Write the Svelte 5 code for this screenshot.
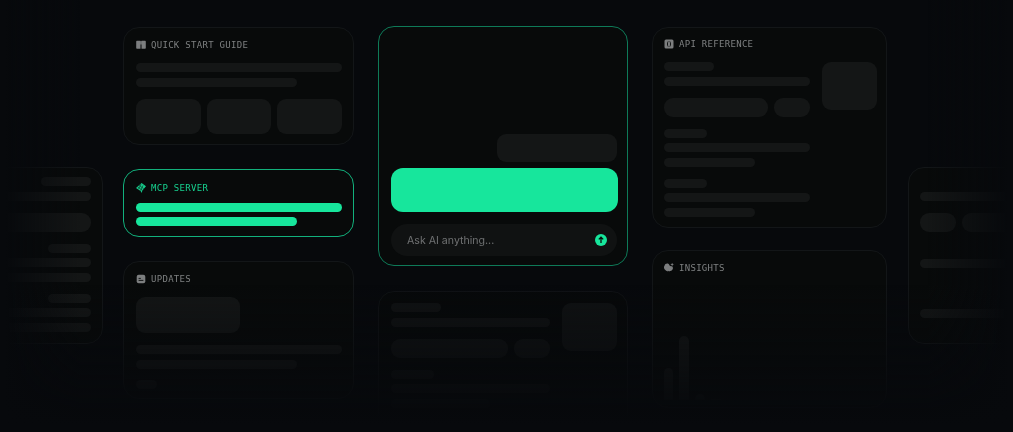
<script>
  const chartBars = [
    { w: 9, h: 32 },
    { w: 10, h: 64 },
    { w: 10, h: 6 },
    { w: 10, h: 1 },
  ];
</script>

{#snippet docRows(single = false)}
  <div class="bar short"></div>
  <div class="bar"></div>
  <div class="pills">
    <div class="pill grow"></div>
    {#if !single}
      <div class="pill"></div>
    {/if}
  </div>
  <div class="bar shorter section"></div>
  <div class="bar"></div>
  <div class="bar third"></div>
  <div class="bar shorter section"></div>
  <div class="bar"></div>
  <div class="bar third"></div>
{/snippet}

<main class="canvas">
  <div class="column side">
    <section class="card mirrored">
      {@render docRows(true)}
    </section>
  </div>

  <div class="column left">
    <section class="card guide">
      <header class="head">
        <svg viewBox="0 0 10 10" aria-hidden="true">
          <path d="M.2 1.400C.2 1 .5.800.9.800h3.300c.4 0 .7.300.7.700v7.200H.9c-.4 0-.7-.3-.7-.7zM9.800 1.400c0-.4-.3-.6-.7-.6H5.800c-.4 0-.7.300-.7.700v7.200h4c.4 0 .7-.3.7-.7z" />
          <path class="cut" d="M5 4.500v4.500" />
        </svg>
        <span>QUICK START GUIDE</span>
      </header>
      <div class="lines">
        <div class="bar"></div>
        <div class="bar wide"></div>
      </div>
      <div class="tiles">
        <div class="tile"></div>
        <div class="tile"></div>
        <div class="tile"></div>
      </div>
    </section>

    <section class="card mcp">
      <header class="head">
        <svg viewBox="0 0 10 10" aria-hidden="true">
          <path d="M5.600 0 10 3.200 6.400 7.600 5.600 10 4.600 7.900 0 5z" />
          <path class="cut" d="M3.200 2.400 7.600 5.600M1.800 4 6.200 7.200M5 1 2.600 6M7 2.400 4.600 7.600" />
        </svg>
        <span>MCP SERVER</span>
      </header>
      <div class="lines">
        <div class="bar green"></div>
        <div class="bar wide green"></div>
      </div>
    </section>

    <section class="card updates">
      <header class="head">
        <svg viewBox="0 0 10 10" aria-hidden="true">
          <rect x=".7" y=".7" width="8.600" height="8.600" rx="2" />
          <path class="cut" d="M2.600 4.400h2.200M2.600 6.400h4.800" />
        </svg>
        <span>UPDATES</span>
      </header>
      <div class="tile banner"></div>
      <div class="lines spaced">
        <div class="bar"></div>
        <div class="bar wide"></div>
      </div>
      <div class="bar chip"></div>
    </section>
  </div>

  <div class="column center">
    <section class="card chat">
      <div class="bubble"></div>
      <div class="answer"></div>
      <div class="ask">
        <span>Ask AI anything...</span>
        <svg viewBox="0 0 12 12" aria-hidden="true">
          <circle cx="6" cy="6" r="6" />
          <path d="M6 9V3.400M3.800 5.400 6 3.200l2.200 2.200" />
        </svg>
      </div>
    </section>

    <section class="card docs lower">
      <div class="main">
        {@render docRows()}
      </div>
      <div class="thumb"></div>
    </section>
  </div>

  <div class="column right">
    <section class="card api">
      <header class="head">
        <svg viewBox="0 0 10 10" aria-hidden="true">
          <rect x=".5" y=".5" width="9" height="9" rx="1.500" />
          <path class="cut" d="M4.200 2.400C3.200 3.400 3.200 6.600 4.200 7.600M5.800 2.400C6.800 3.400 6.800 6.600 5.800 7.600" />
        </svg>
        <span>API REFERENCE</span>
      </header>
      <div class="docs">
        <div class="main">
          {@render docRows()}
        </div>
        <div class="thumb"></div>
      </div>
    </section>

    <section class="card insights">
      <header class="head">
        <svg viewBox="0.3 0.4 9.700 9.700" aria-hidden="true">
          <path d="M3.400 1c1.100 0 1.800.6 2 1.300.3.900 1.300 1.300 2.700 1.300 1.200.9 1.100 2.800 0 3.700-.3.800-1.200 1-1.700.5-.3.900-1.100.9-1.500.2-.5.800-1.300.7-1.600 0-.8.300-1.400-.2-1.500-.8C.3 6.500-.2 4.300.8 3 1.100 1.800 2.200 1 3.400 1z" />
          <path d="M8.200 0l.5 1.300 1.300.5-1.300.5-.5 1.300-.5-1.300-1.300-.5 1.300-.5z" />
        </svg>
        <span>INSIGHTS</span>
      </header>
      <div class="chart">
        {#each chartBars as b}
          <div class="chart-bar" style="width: {b.w}px; height: {b.h}px"></div>
        {/each}
      </div>
    </section>
  </div>

  <div class="column side">
    <section class="card peek">
      <div class="bar long"></div>
      <div class="pills">
        <div class="pill first"></div>
        <div class="pill grow"></div>
      </div>
      <div class="bar long gap-a"></div>
      <div class="bar long gap-b"></div>
    </section>
  </div>

  <div class="fade"></div>
</main>

<style>
  :global(body) {
    margin: 0;
    background: #07090c;
    overflow: hidden;
  }

  :global(*) {
    box-sizing: border-box;
  }

  .canvas {
    position: relative;
    width: 1013px;
    height: 432px;
    display: flex;
    overflow: hidden;
    background: #07090c;
  }

  .column {
    flex: none;
    display: flex;
    flex-direction: column;
  }

  .column.side {
    width: 232px;
    padding-top: 167px;
    margin-left: -129px;
  }

  .column.right + .column.side {
    margin-left: 21px;
  }

  .column.left {
    width: 231px;
    margin-left: 20px;
    padding-top: 27px;
    gap: 24px;
  }

  .column.center {
    width: 250px;
    margin-left: 24px;
    padding-top: 26px;
    gap: 25px;
  }

  .column.right {
    width: 235px;
    margin-left: 24px;
    padding-top: 27px;
    gap: 22px;
  }

  .card {
    flex: none;
    border: 1px solid #131618;
    border-radius: 16px;
    background: #080a0a;
  }

  .head {
    display: flex;
    align-items: center;
    gap: 5px;
    height: 10px;
    margin-bottom: 13px;
    color: #7e8081;
    font-family: "DejaVu Sans Mono", monospace;
    font-size: 9px;
    letter-spacing: 0.3px;
    white-space: nowrap;
    will-change: transform;
  }

  .head svg {
    width: 10px;
    height: 10px;
    flex: none;
    fill: #7c7e7f;
  }

  .head .cut {
    fill: none;
    stroke: #080a0a;
    stroke-width: 0.9;
  }

  .bar {
    height: 9px;
    border-radius: 5px;
    background: #141616;
  }

  .bar.wide {
    width: 161px;
  }

  .bar.green {
    background: #17e69c;
  }

  .lines {
    display: flex;
    flex-direction: column;
    gap: 6px;
  }

  .tile {
    height: 35px;
    border-radius: 9px;
    background: #141616;
  }

  .guide {
    padding: 12px 11px 10px 12px;
  }

  .tiles {
    display: grid;
    grid-template-columns: repeat(3, 1fr);
    gap: 6px;
    margin-top: 12px;
  }

  .mcp {
    padding: 13px 11px 10px 12px;
    border-color: #12b07c;
  }

  .mcp .head {
    margin-bottom: 10px;
    color: #17d18f;
  }

  .mcp .head svg {
    fill: #17c98a;
  }

  .mcp .head .cut {
    stroke-width: 0.5;
  }

  .mcp .lines {
    gap: 5px;
  }

  .updates {
    padding: 12px 11px 9px 12px;
  }

  .banner {
    width: 104px;
    height: 36px;
  }

  .spaced {
    margin-top: 12px;
  }

  .chip {
    width: 21px;
    margin-top: 11px;
  }

  .chat {
    height: 240px;
    display: flex;
    flex-direction: column;
    justify-content: flex-end;
    padding: 12px 9px 9px 12px;
    border-color: #0e7a58;
  }

  .bubble {
    width: 120px;
    height: 28px;
    margin-left: auto;
    margin-right: 1px;
    border-radius: 9px;
    background: #141616;
  }

  .answer {
    height: 44px;
    margin-top: 6px;
    border-radius: 12px;
    background: #17e69c;
  }

  .ask {
    height: 32px;
    margin-top: 12px;
    margin-right: 1px;
    display: flex;
    align-items: center;
    justify-content: space-between;
    padding: 0 10px 0 16px;
    border-radius: 16px;
    background: #101212;
    color: #707273;
    font-family: Inter, "Liberation Sans", sans-serif;
    font-size: 10.600px;
    will-change: transform;
  }

  .ask svg {
    width: 12px;
    height: 12px;
    fill: #17e69c;
  }

  .ask path {
    fill: none;
    stroke: #07120e;
    stroke-width: 1.300;
  }

  .docs {
    display: grid;
    grid-template-columns: 1fr 55px;
    gap: 12px;
    align-items: start;
  }

  .main {
    display: flex;
    flex-direction: column;
    gap: 5.500px;
    min-width: 0;
  }

  .short {
    width: 50px;
  }

  .shorter {
    width: 43px;
  }

  .third {
    width: 62%;
  }

  .section {
    margin-top: 6.500px;
  }

  .pills {
    display: flex;
    gap: 6px;
    margin-top: 6.500px;
  }

  .pill {
    width: 36px;
    height: 19px;
    border-radius: 9px;
    background: #141616;
  }

  .pill.grow {
    flex: 1;
    width: auto;
  }

  .thumb {
    height: 48px;
    border-radius: 9px;
    background: #141616;
  }

  .lower {
    padding: 11px 10px 10px 12px;
    opacity: 0.75;
  }

  .api {
    padding: 11px 9px 10.500px 11px;
  }

  .insights {
    height: 158px;
    display: flex;
    flex-direction: column;
    padding: 12px 11px 7px 11px;
  }

  .chart {
    margin-top: auto;
    display: flex;
    align-items: flex-end;
    gap: 6px;
  }

  .chart-bar {
    border-radius: 5px 5px 0 0;
    background: #141616;
  }

  .mirrored {
    height: 177px;
    display: flex;
    flex-direction: column;
    gap: 5.500px;
    padding: 9px 11px 0 12px;
  }

  .mirrored .short,
  .mirrored .shorter {
    align-self: flex-end;
  }

  .mirrored .third {
    width: 100%;
  }

  .peek {
    height: 177px;
    padding: 24px 0 0 11px;
  }

  .long {
    width: 160px;
  }

  .peek .pills {
    margin-top: 12px;
  }

  .peek .first {
    width: 36px;
  }

  .gap-a {
    margin-top: 27px;
  }

  .gap-b {
    margin-top: 41px;
  }

  /* edges and bottom dissolve into the page */
  .fade {
    position: absolute;
    inset: 0;
    pointer-events: none;
    background:
      linear-gradient(to bottom, rgba(7, 9, 12, 0) 285px, rgba(7, 9, 12, 0.42) 345px, rgba(7, 9, 12, 0.88) 400px, #07090c 425px),
      linear-gradient(to right, #07090c 5px, rgba(7, 9, 12, 0) 80px),
      linear-gradient(to left, #07090c 5px, rgba(7, 9, 12, 0) 85px);
  }
</style>
